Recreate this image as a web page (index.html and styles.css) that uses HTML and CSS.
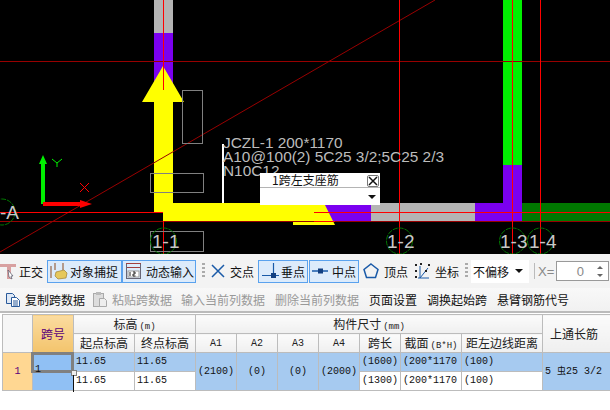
FILE: index.html
```html
<!DOCTYPE html>
<html lang="zh">
<head>
<meta charset="utf-8">
<title>跨左支座筋</title>
<link rel="stylesheet" href="styles.css">
</head>
<body>
<div class="app">
  <div class="canvas">
    <svg class="drawing" width="610" height="254" viewBox="0 0 610 254">
      <rect x="154" y="0" width="19" height="33" fill="#b4b4b4"/>
      <rect x="154" y="33" width="19" height="50" fill="#7b00f0"/>
      <rect x="503" y="0" width="19" height="165" fill="#00f000"/>
      <path d="M503 165h19v56h-47v-18h28z" fill="#7b00f0"/>
      <rect x="371" y="203" width="104" height="18" fill="#b4b4b4"/>
      <rect x="522" y="203" width="88" height="18" fill="#007800"/>
      <path d="M320 203h51v18h-40z" fill="#7b00f0"/>
      <path d="M163 66l21 36h-11v101h151l11 22h-42v-3H163v-10h-9V102h-12z" fill="#ff0" />
      <g stroke="#980000" fill="none">
        <path d="M0 61.500h610M0 221.500h610"/>
        <path d="M0 252L435 0"/>
      </g>
      <g stroke="#f00" fill="none">
        <path d="M163.500 0v90M163.500 221v33M399.500 0v254M512.500 0v254M540.500 0v254"/>
        <path d="M0 212.500h163M314 212.500h296M314 221.500h21"/>
      </g>
      <g stroke="#808080" fill="none">
        <rect x="182.500" y="90.500" width="20" height="53"/>
        <rect x="150.500" y="173.500" width="53" height="19"/>
        <rect x="150.500" y="231.500" width="53" height="20"/>
      </g>
      <rect x="222" y="144" width="2" height="59" fill="#fff"/>
      <path d="M41 204v-40h-2l4-9 4 9h-2v40z" fill="#00f000"/>
      <path d="M43 202h37v-2l12 4-12 4v-2H43z" fill="#f00"/>
      <path d="M52 159l5 4 5-4M57 163v4" stroke="#00f000" fill="none"/>
      <path d="M80 183l9 9M89 183l-9 9" stroke="#f00" fill="none"/>
      <g fill="none" stroke="#007800" stroke-dasharray="5 1">
        <circle cx="2" cy="212" r="13"/>
        <circle cx="163.500" cy="241" r="13"/>
        <circle cx="399.500" cy="241" r="13"/>
        <circle cx="512.500" cy="241" r="13"/>
        <circle cx="540.500" cy="241" r="13"/>
      </g>
      <g class="axis-label">
        <text x="0" y="219">-A</text>
        <text x="152" y="248">1-1</text>
        <text x="387" y="248">1-2</text>
        <text x="500" y="248">1-3</text>
        <text x="529" y="248">1-4</text>
      </g>
      <g class="note">
        <text x="223" y="148">JCZL-1 200*1170</text>
        <text x="223" y="162">A10@100(2) 5C25 3/2;5C25 2/3</text>
        <text x="223" y="176">N10C12</text>
      </g>
    </svg>
    <div class="popup">
      <div class="popup-title">
        <span class="popup-text">1跨左支座筋</span>
        <span class="popup-close">
          <svg width="10" height="10" viewBox="0 0 10 10"><path d="M1 1l8 8M9 1L1 9" stroke="#111" stroke-width="1.500" fill="none"/></svg>
        </span>
      </div>
      <div class="popup-select"><span class="caret"></span></div>
    </div>
  </div>

  <div class="bar bar-modes">
    <div class="tool tool-ortho">
      <svg width="17" height="18" viewBox="0 0 17 18"><path d="M0 2h16v3H11v12H7V5H0z" fill="#d8a0a0"/><path d="M8 8l5 6-2 0 1 3-3-2z" fill="#fff" stroke="#556" stroke-width=".7"/></svg>
      <span>正交</span>
    </div>
    <div class="tool tool-on tool-snap">
      <svg width="18" height="18" viewBox="0 0 18 18"><path d="M1 4v12M5 1v7M13 1v7" stroke="#964" stroke-width="1.200" fill="none"/><path d="M6 10l8-2 3 3-1 5-8 1-3-3z" fill="#e6c85c" stroke="#a08030" stroke-width=".7"/></svg>
      <span>对象捕捉</span>
    </div>
    <div class="tool tool-on tool-dyn">
      <svg width="18" height="18" viewBox="0 0 18 18"><path d="M1 1.500h15M1 5.500h15" stroke="#a04040" fill="none"/><path d="M1.500 2v14M15.500 2v14M1 16.500h15" stroke="#667" fill="none"/><rect x="3" y="9" width="11" height="6" fill="#fff" stroke="#999"/><path d="M5 10v4M8 10h2v2H8v2h2.500" stroke="#222" fill="none"/></svg>
      <span>动态输入</span>
    </div>
    <div class="grip"></div>
    <div class="tool tool-cross">
      <svg width="16" height="16" viewBox="0 0 16 16"><path d="M2 2l12 12M14 2L2 14" stroke="#1a5aa8" stroke-width="1.500" fill="none"/></svg>
      <span>交点</span>
    </div>
    <div class="tool tool-on tool-perp">
      <svg width="20" height="18" viewBox="0 0 20 18"><path d="M1 13.500h17M12.500 1v12" stroke="#1a5aa8" stroke-width="1.200" fill="none"/><rect x="10" y="11" width="5" height="5" fill="#123f80"/></svg>
      <span>垂点</span>
    </div>
    <div class="tool tool-on tool-mid">
      <svg width="16" height="18" viewBox="0 0 16 18"><path d="M0 9h16" stroke="#1a5aa8" stroke-width="1.500" fill="none"/><rect x="6" y="6.500" width="5" height="5" fill="#123f80"/></svg>
      <span>中点</span>
    </div>
    <div class="tool tool-top">
      <svg width="16" height="16" viewBox="0 0 16 16"><path d="M8 1l7 5.500-2.500 8h-9L1 6.500z" stroke="#1a5aa8" stroke-width="1.500" fill="none"/></svg>
      <span>顶点</span>
    </div>
    <div class="tool tool-coord">
      <svg width="18" height="18" viewBox="0 0 18 18"><path d="M4 16h11M6 16V4M6 16l8-10" stroke="#1a5aa8" fill="none"/><g fill="#222"><rect x="1" y="2" width="2" height="2"/><rect x="6" y="1" width="2" height="2"/><rect x="14" y="2" width="2" height="2"/><rect x="1" y="8" width="2" height="2"/><rect x="1" y="14" width="2" height="2"/><rect x="11" y="8" width="2" height="2"/></g></svg>
      <span>坐标</span>
    </div>
    <div class="grip grip-right"></div>
    <div class="select"><span>不偏移</span><span class="caret"></span></div>
    <div class="vsep"></div>
    <span class="x-label">X=</span>
    <div class="number"><span>0</span><span class="spin"><i class="up"></i><i class="down"></i></span></div>
  </div>

  <div class="bar bar-actions">
    <div class="act">
      <svg width="16" height="16" viewBox="0 0 16 16"><path d="M1.500 1.500h6l2 2v8h-8z" fill="#dfe9f6" stroke="#2a5a9a"/><path d="M6.500 5.500h5l3 3v6h-8z" fill="#fff" stroke="#2a5a9a"/><path d="M8 9h5M8 11h5M8 13h5" stroke="#2a5a9a" fill="none"/></svg>
      <span>复制跨数据</span>
    </div>
    <div class="act act-off">
      <svg width="16" height="17" viewBox="0 0 16 17"><rect x="1.500" y="2.500" width="10" height="13" fill="#ddd" stroke="#aaa"/><rect x="4" y="1" width="5" height="3" fill="#bbb"/><path d="M7.500 7.500h5l2 2v6h-7z" fill="#eee" stroke="#aaa"/></svg>
      <span>粘贴跨数据</span>
    </div>
    <div class="act act-off act-input"><span>输入当前列数据</span></div>
    <div class="act act-off act-del"><span>删除当前列数据</span></div>
    <div class="act act-page"><span>页面设置</span></div>
    <div class="act act-swap"><span>调换起始跨</span></div>
    <div class="act act-code"><span>悬臂钢筋代号</span></div>
  </div>

  <div class="grid-wrap">
    <table class="grid">
      <colgroup>
        <col class="c-idx"><col class="c-span"><col class="c-el"><col class="c-el">
        <col class="c-a"><col class="c-a"><col class="c-a"><col class="c-a">
        <col class="c-a"><col class="c-sec"><col class="c-dist"><col class="c-top">
      </colgroup>
      <tr class="r-head1">
        <th rowspan="2" class="blank"></th>
        <th rowspan="2" class="key">跨号</th>
        <th colspan="2">标高<small>(m)</small></th>
        <th colspan="7">构件尺寸<small>(mm)</small></th>
        <th rowspan="2" class="top-head">上通长筋</th>
      </tr>
      <tr class="r-head2">
        <th>起点标高</th><th>终点标高</th>
        <th class="latin">A1</th><th class="latin">A2</th><th class="latin">A3</th><th class="latin">A4</th>
        <th>跨长</th><th>截面<small>(B*H)</small></th><th>距左边线距离</th>
      </tr>
      <tr class="r-body sel">
        <td rowspan="2" class="row-no">1</td>
        <td rowspan="2" class="cur"></td>
        <td>11.65</td><td>11.65</td>
        <td rowspan="2">(2100)</td><td rowspan="2">(0)</td><td rowspan="2">(0)</td><td rowspan="2">(2000)</td>
        <td>(1600)</td><td>(200*1170</td><td>(100)</td>
        <td rowspan="2" class="top-cell">5 <b>虫</b>25 3/2</td>
      </tr>
      <tr class="r-body">
        <td>11.65</td><td>11.65</td>
        <td>(1300)</td><td>(200*1170</td><td>(100)</td>
      </tr>
    </table>
    <div class="cursor-box"><span>1</span><i></i></div>
    <div class="cursor-tail"></div>
  </div>
</div>
</body>
</html>
```
FILE: styles.css
```css
* { box-sizing: border-box; }
html, body { margin: 0; padding: 0; background: #fff; }
.app {
  width: 610px; height: 410px; overflow: hidden;
  font-family: "Noto Sans CJK SC", "Liberation Sans", sans-serif;
  font-size: 12px; color: #111;
}
.canvas { position: relative; height: 254px; background: #000; overflow: hidden; }
.drawing { display: block; }
.axis-label text { font: 19px "Liberation Sans", sans-serif; fill: #c8c8c8; }
.note text { font: 15.400px "Liberation Sans", sans-serif; fill: #bcbcbc; }

.popup { position: absolute; left: 260px; top: 173px; width: 120px; height: 32px; background: #fff; }
.popup-title { height: 15px; border-bottom: 1px solid #b4b4b4; display: flex; align-items: center; position: relative; }
.popup-text { margin-left: 12px; line-height: 14px; white-space: nowrap; }
.popup-close {
  position: absolute; left: 107px; top: 2px; width: 12px; height: 12px;
  border: 1px solid #777; border-radius: 2px; display: flex; align-items: center; justify-content: center;
}
.popup-close svg { flex: none; }
.popup-select { height: 17px; position: relative; }
.popup-select .caret { position: absolute; left: 108px; top: 7px; }
.caret { display: inline-block; width: 0; height: 0; border: 4px solid transparent; border-top: 4px solid #111; border-bottom: 0; }

.bar { display: flex; align-items: center; }
.bar-modes { height: 34px; background: #f3f3f3; }
.tool { display: flex; align-items: center; height: 23px; flex: none; white-space: nowrap; }
.tool svg { flex: none; }
.tool-on { background: #dcebfb; border: 1px solid #5aa2ee; }
.tool-ortho { width: 47px; gap: 2px; }
.tool-snap { width: 75px; padding-left: 2px; gap: 2px; }
.tool-dyn { width: 74px; padding-left: 2px; gap: 3px; }
.grip { width: 3px; height: 16px; margin: 0 5px 0 6px; background: repeating-linear-gradient(#aaa 0 2px, transparent 2px 4px); flex: none; }
.tool-cross { width: 48px; gap: 4px; }
.tool-perp { width: 50px; padding-left: 2px; }
.tool-mid { width: 50px; padding-left: 2px; gap: 4px; margin-left: 1px; }
.tool-top { width: 48px; margin-left: 4px; gap: 5px; }
.tool-coord { width: 46px; margin-left: 3px; gap: 3px; }
.grip-right { margin: 0 3px 0 5px; }
.select { width: 58px; height: 23px; background: #fff; display: flex; align-items: center; justify-content: space-between; padding: 0 6px 0 2px; flex: none; white-space: nowrap; }
.vsep { width: 1px; height: 16px; background: #bbb; margin: 0 3px 0 5px; flex: none; }
.x-label { color: #888; width: 18px; font: 13px "Liberation Sans", sans-serif; flex: none; }
.number { width: 53px; height: 20px; border: 1px solid #999; background: #fff; flex: none; display: flex; align-items: center; justify-content: flex-end; color: #888; font: 13px "Liberation Sans", sans-serif; }
.spin { width: 16px; margin-left: 8px; display: flex; flex-direction: column; align-items: center; gap: 5px; }
.spin i { width: 0; height: 0; border: 3px solid transparent; }
.spin .up { border-bottom: 3px solid #666; border-top: 0; }
.spin .down { border-top: 3px solid #666; border-bottom: 0; }

.bar-actions { height: 25px; background: linear-gradient(#f8f8f8, #f1f1f1); border-bottom: 2px solid #bbb; padding-left: 5px; }
.act { display: flex; align-items: center; gap: 4px; flex: none; white-space: nowrap; }
.act-off { color: #999; }
.act:nth-child(2) { margin-left: 7px; }
.act-input { margin-left: 9px; }
.act-del { margin-left: 10px; }
.act-page { margin-left: 10px; }
.act-swap { margin-left: 10px; }
.act-code { margin-left: 10px; }

.grid-wrap { position: relative; padding: 1px 0 0 2px; }
.grid { border-collapse: collapse; table-layout: fixed; width: 608px; font-size: 12px; }
.grid th, .grid td { border: 1px solid #bcbcbc; padding: 0; text-align: center; overflow: hidden; white-space: nowrap; line-height: 14px; }
.grid th { background: linear-gradient(#fbfbfb, #efefef); font-weight: 400; color: #222; }
.grid small { font: 9px "Liberation Mono", monospace; margin-left: 2px; }
.grid th.latin { font: 400 10px "Liberation Mono", monospace; }
.grid th.blank { background: #f6f6f6; }
.grid th.key { background: linear-gradient(#fbdca0, #f3c46c); color: #5a007a; font-size: 12px; }
.grid th.top-head { text-align: left; padding-left: 7px; }
.c-idx { width: 30px; } .c-span { width: 41px; } .c-el { width: 61px; }
.c-a { width: 41px; } .c-sec { width: 61px; } .c-dist { width: 81px; } .c-top { width: 68px; }
.r-head1 { height: 19px; } .r-head2 { height: 19px; } .r-body { height: 19px; }
.grid td { font: 10px/14px "Liberation Mono", monospace; background: #fff; text-align: left; padding-left: 2px; color: #111; }
.grid td[rowspan] { background: #a6caf0; text-align: center; padding: 0; }
.grid .sel td { background: #a6caf0; }
.grid td.row-no { background: #ffd792; color: #5a007a; }
.grid td.cur { background: #90c0f4; }
.grid td.top-cell { text-align: left; padding-left: 2px; }
.grid b { font: 400 9px "Noto Sans CJK SC", sans-serif; }
.cursor-box { position: absolute; left: 31px; top: 39px; width: 43px; height: 21px; border: 3px solid #808080; }
.cursor-box span { position: absolute; left: 1px; top: 9px; font: 10px "Liberation Mono", monospace; }
.cursor-box i { position: absolute; right: -6px; bottom: -6px; width: 6px; height: 6px; background: #eee; border: 1px solid #808080; }
.cursor-tail { position: absolute; left: 73px; top: 62px; width: 1px; height: 17px; background: #111; }
```
